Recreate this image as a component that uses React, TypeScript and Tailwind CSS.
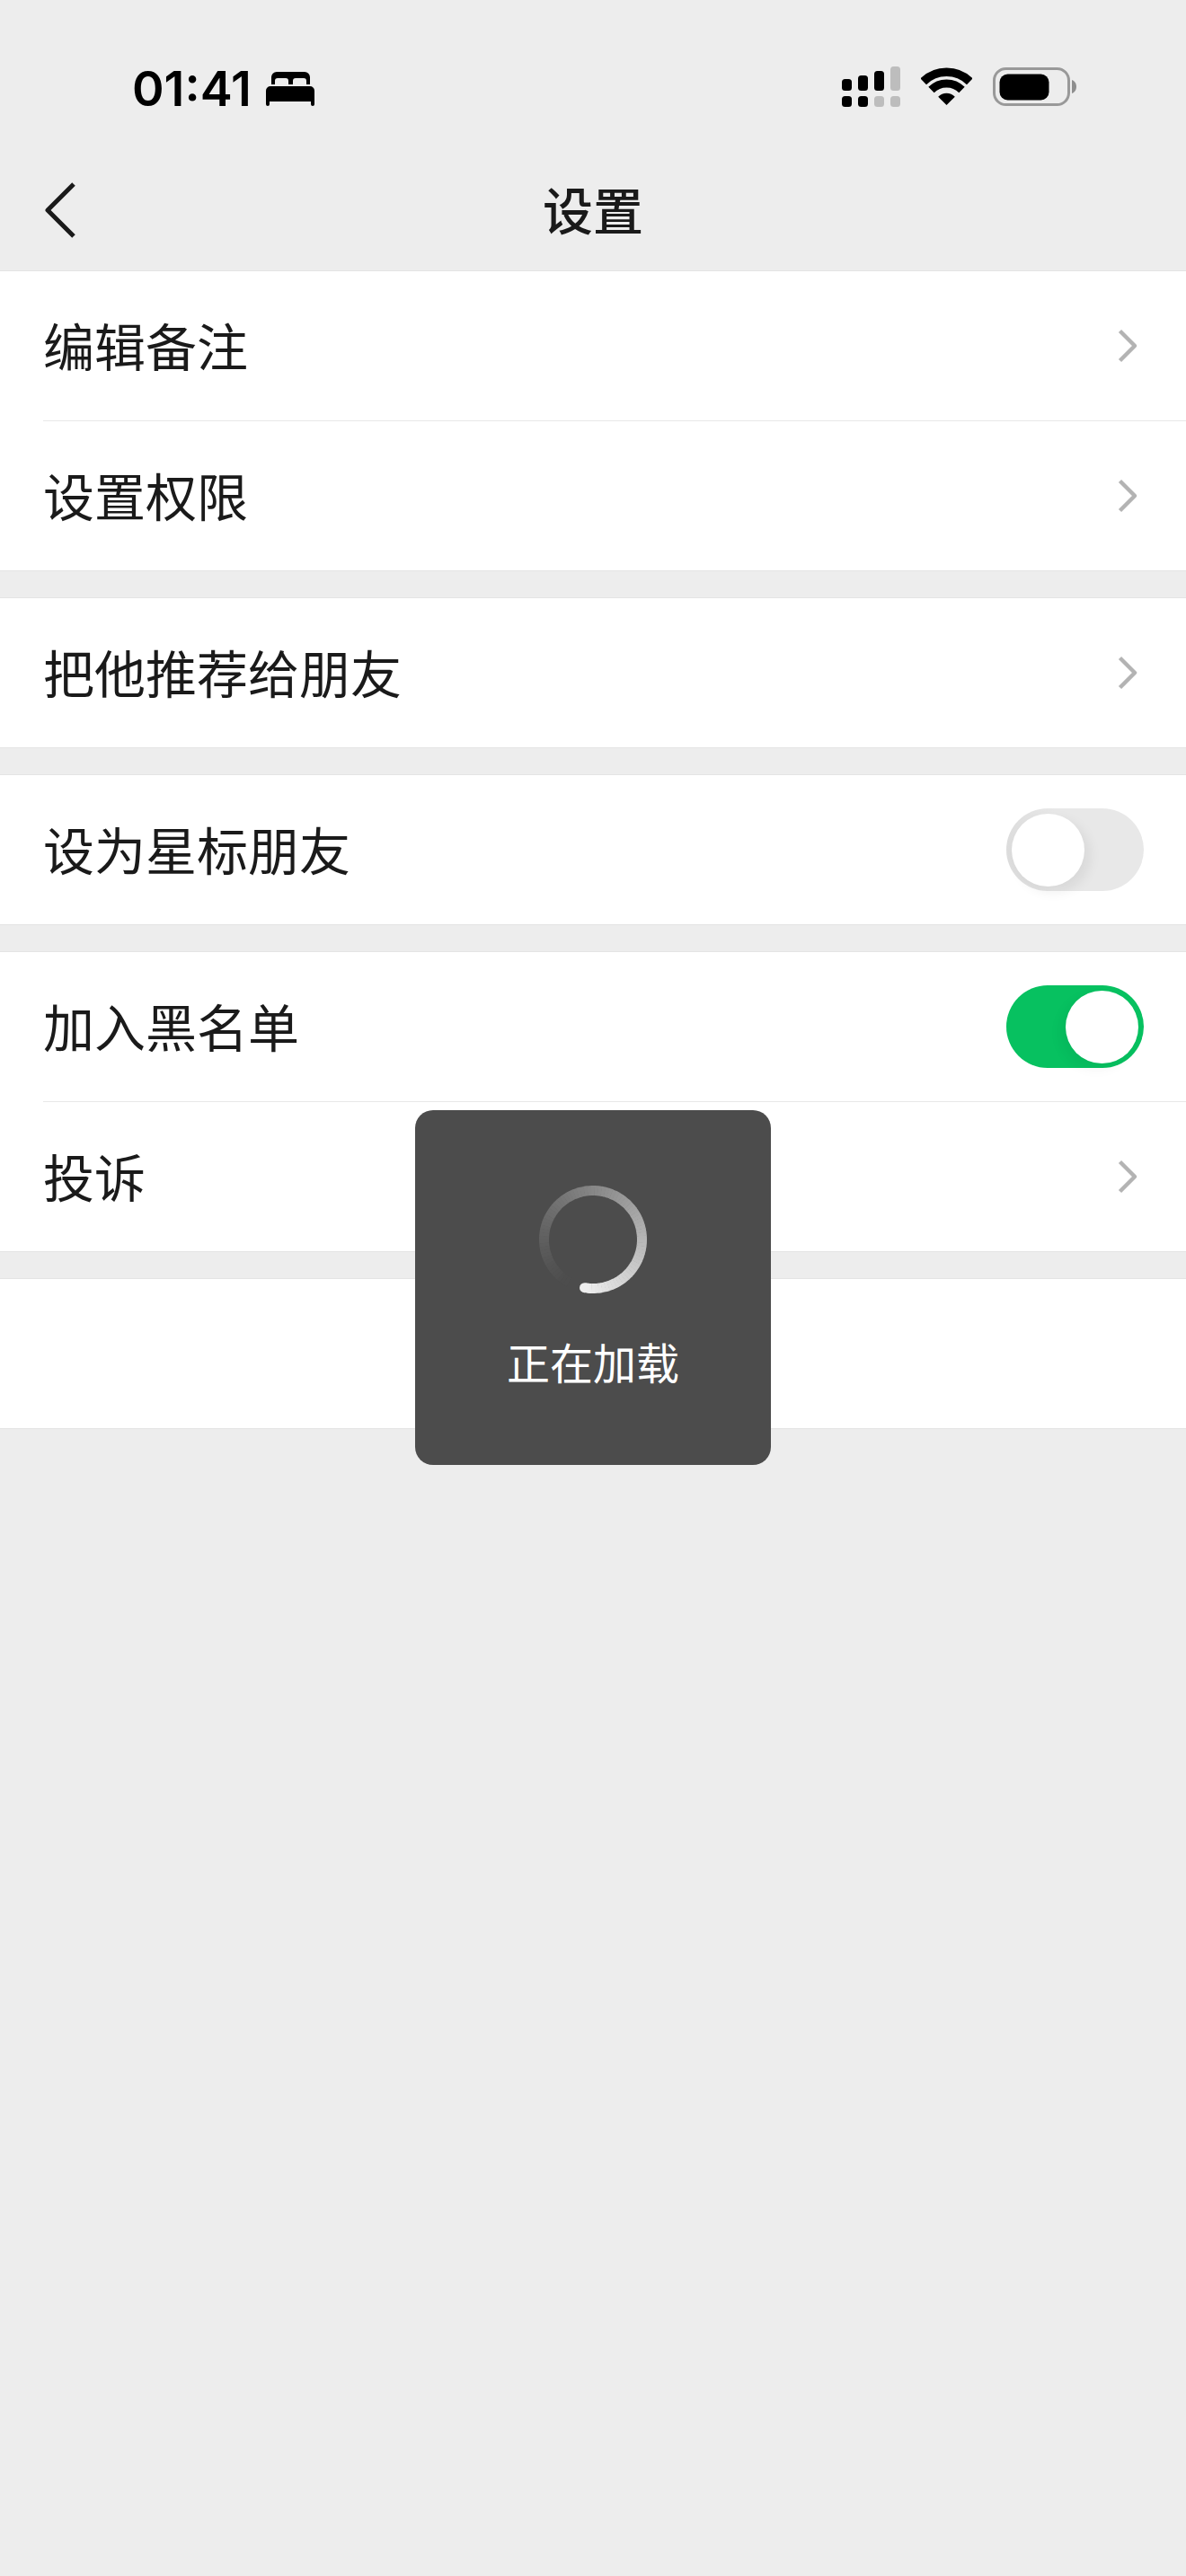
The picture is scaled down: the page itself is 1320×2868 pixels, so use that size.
const cjk = "font-['Noto_Sans_CJK_SC','Noto_Sans',sans-serif]";

function Chevron() {
  return (
    <svg className="mr-[6px]" width="24" height="42" viewBox="0 0 24 42" fill="none">
      <path d="M3.5 4.5 L20 21 L3.5 37.5" stroke="#b3b3b3" strokeWidth="4.5" strokeLinejoin="round" />
    </svg>
  );
}

function Toggle({ on }: { on: boolean }) {
  if (on) {
    return (
      <div className="flex h-[92px] w-[153px] items-center justify-end rounded-full bg-[#07c160] p-[6px]">
        <div className="h-[81px] w-[81px] rounded-full bg-white shadow-[-6px_6px_14px_rgba(0,0,0,0.05)]" />
      </div>
    );
  }
  return (
    <div className="flex h-[92px] w-[153px] items-center justify-start rounded-full bg-[linear-gradient(90deg,#dcdcdc,#e8e8e8_35%)] p-[6px]">
      <div className="h-[81px] w-[81px] rounded-full bg-white shadow-[6px_6px_14px_rgba(0,0,0,0.07)]" />
    </div>
  );
}

function Row({ label, right }: { label?: string; right?: React.ReactNode }) {
  return (
    <div className="flex h-[166px] items-center justify-between pl-[48px] pr-[47px]">
      <span className="pb-[4px] text-[57px] leading-none text-[#1a1a1a]">{label}</span>
      {right}
    </div>
  );
}

function Divider() {
  return <div className="ml-[48px] h-px bg-[#e8e8e8]" />;
}

function Section({ children }: { children: React.ReactNode }) {
  return <div className="border-y border-[#e4e4e4] bg-white">{children}</div>;
}

function Bed() {
  return (
    <svg width="54" height="38" viewBox="0 0 54 38" fill="#000">
      <path d="M6 14 V6 A6 6 0 0 1 12 0 H43 A6 6 0 0 1 49 6 V14 H45 V10 A3 3 0 0 0 42 7 H33 A3 3 0 0 0 30 10 V14 H25 V10 A3 3 0 0 0 22 7 H13 A3 3 0 0 0 10 10 V14 Z" />
      <path d="M0 21 A5 5 0 0 1 5 16 H49 A5 5 0 0 1 54 21 V36 A2 2 0 0 1 50 36 V33 H4 V36 A2 2 0 0 1 0 36 Z" />
    </svg>
  );
}

function Signal() {
  return (
    <svg width="65" height="46" viewBox="0 0 65 46">
      <rect x="0" y="14" width="11" height="13" rx="3.5" fill="#000" />
      <rect x="18" y="10" width="11" height="17" rx="3.5" fill="#000" />
      <rect x="36" y="5" width="11" height="22" rx="3.5" fill="#000" />
      <rect x="54" y="0" width="11" height="27" rx="3.5" fill="#bdbdbd" />
      <rect x="0" y="33" width="11" height="12" rx="3.5" fill="#000" />
      <rect x="18" y="33" width="11" height="12" rx="3.5" fill="#000" />
      <rect x="36" y="33" width="11" height="12" rx="3.5" fill="#bdbdbd" />
      <rect x="54" y="33" width="11" height="12" rx="3.5" fill="#bdbdbd" />
    </svg>
  );
}

function Wifi() {
  return (
    <svg width="57" height="42" viewBox="0 0 57 42" fill="none">
      <path d="M2.7 15.8 A37 37 0 0 1 54.3 15.8" stroke="#000" strokeWidth="9.5" />
      <path d="M11.5 25 A24 24 0 0 1 45.5 25" stroke="#000" strokeWidth="9" />
      <path d="M28.5 42 L19.2 32.7 A13.2 13.2 0 0 1 37.8 32.7 Z" fill="#000" />
    </svg>
  );
}

function Battery() {
  return (
    <svg width="94" height="43" viewBox="0 0 94 43" fill="none">
      <rect x="1.5" y="1.5" width="83" height="40" rx="13" stroke="#999" strokeWidth="3" />
      <rect x="7.5" y="7.5" width="55" height="29" rx="9" fill="#000" />
      <path d="M88 14 C91 15 93 18 93 21.5 C93 25 91 28 88 29 Z" fill="#8e8e8e" />
    </svg>
  );
}

function Spinner() {
  // brightest at the head, fading clockwise away from it
  const cx = 60;
  const cy = 60;
  const r = 54.5;
  const head = 190;
  const sweep = 340;
  const steps = 85;
  const point = (deg: number) => {
    const a = (deg * Math.PI) / 180;
    return [cx + r * Math.sin(a), cy - r * Math.cos(a)];
  };
  const arcs = Array.from({ length: steps }, (_, i) => {
    const t = i / steps;
    const [x1, y1] = point(head - sweep * t);
    const [x2, y2] = point(head - sweep * (t + 1 / steps) - 0.5);
    const v = Math.round(76 + 162 * Math.pow(1 - t, 1.25));
    return (
      <path
        key={i}
        d={`M${x1} ${y1} A${r} ${r} 0 0 0 ${x2} ${y2}`}
        stroke={`rgb(${v},${v},${v})`}
        strokeWidth="11"
      />
    );
  });
  const [hx, hy] = point(head);
  return (
    <svg width="120" height="120" viewBox="0 0 120 120" fill="none">
      {arcs}
      <circle cx={hx} cy={hy} r="5.5" fill="#eeeeee" />
    </svg>
  );
}

export default function App() {
  return (
    <div className={`relative flex h-[2868px] w-[1320px] flex-col overflow-hidden bg-[#ededed] ${cjk}`}>
      {/* Header */}
      <div className="h-[301px]">
        <div className="flex h-[170px] items-start justify-between pl-[147px] pr-[121px] pt-[74px]">
          <div className="flex items-center gap-[16px]">
            <span className="font-['Inter',sans-serif] text-[54px] font-semibold leading-[50px] text-black">01:41</span>
            <Bed />
          </div>
          <div className="flex items-start">
            <Signal />
            <div className="ml-[23px] mt-px"><Wifi /></div>
            <div className="ml-[23px] mt-px"><Battery /></div>
          </div>
        </div>
        <div className="relative flex h-[131px] items-start justify-center pt-[31px]">
          <svg className="absolute left-[48px] top-[32px]" width="38" height="66" viewBox="0 0 38 66" fill="none">
            <path d="M34 3 L5 32 L34 61" stroke="#1a1a1a" strokeWidth="5" strokeLinejoin="round" />
          </svg>
          <span className="text-[56px] font-medium leading-[62px] text-[#1a1a1a]">设置</span>
        </div>
      </div>

      <div className="flex flex-col gap-[29px]">
        <Section>
          <Row label="编辑备注" right={<Chevron />} />
          <Divider />
          <Row label="设置权限" right={<Chevron />} />
        </Section>
        <Section>
          <Row label="把他推荐给朋友" right={<Chevron />} />
        </Section>
        <Section>
          <Row label="设为星标朋友" right={<Toggle on={false} />} />
        </Section>
        <Section>
          <Row label="加入黑名单" right={<Toggle on />} />
          <Divider />
          <Row label="投诉" right={<Chevron />} />
        </Section>
        <Section>
          <Row />
        </Section>
      </div>

      {/* Loading toast */}
      <div className="absolute left-[462px] top-[1236px] flex h-[395px] w-[396px] flex-col items-center rounded-[20px] bg-[#4c4c4c] pt-[84px]">
        <Spinner />
        <span className="mt-[47px] text-[48px] leading-[56px] text-white">正在加载</span>
      </div>
    </div>
  );
}
